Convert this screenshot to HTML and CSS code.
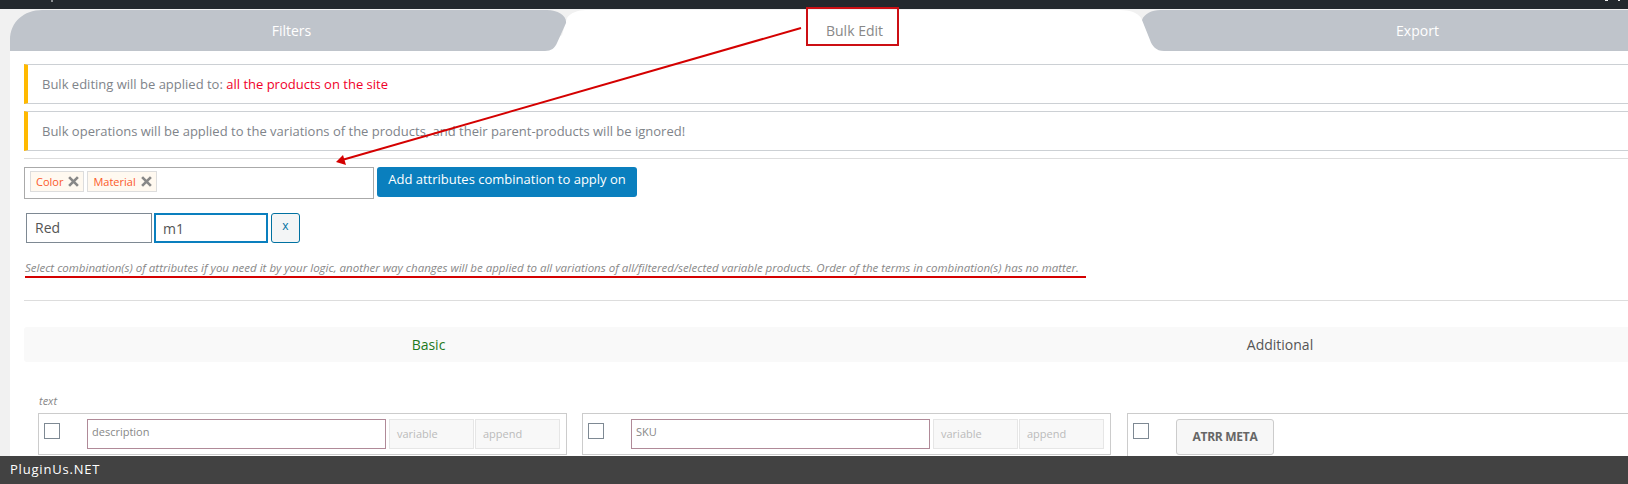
FILE: index.html
```html
<!DOCTYPE html>
<html lang="en">
<head>
<meta charset="utf-8">
<title>Bulk Edit</title>
<link rel="stylesheet" href="styles.css">
</head>
<body>
<div class="page">
  <div class="topbar"></div>
  <nav class="tabs">
    <div class="tab tab-filters">Filters</div>
    <div class="tab tab-bulk">Bulk Edit</div>
    <div class="tab tab-export">Export</div>
  </nav>
  <main class="panel">
    <div class="notice">Bulk editing will be applied to:&nbsp;<span class="notice-red">all the products on the site</span></div>
    <div class="notice">Bulk operations will be applied to the variations of the products, and their parent-products will be ignored!</div>
    <div class="rule rule-top"></div>
    <div class="combo-row">
      <div class="chooser">
        <span class="tag">Color<svg class="tag-x" viewBox="0 0 10 10"><path d="M1 1l8 8M9 1l-8 8"/></svg></span>
        <span class="tag">Material<svg class="tag-x" viewBox="0 0 10 10"><path d="M1 1l8 8M9 1l-8 8"/></svg></span>
      </div>
      <div class="btn-primary">Add attributes combination to apply on</div>
    </div>
    <div class="terms-row">
      <div class="term term-red">Red</div>
      <div class="term term-m1">m1</div>
      <div class="term-del">x</div>
    </div>
    <p class="hint">Select combination(s) of attributes if you need it by your logic, another way changes will be applied to all variations of all/filtered/selected variable products. Order of the terms in combination(s) has no matter.</p>
    <div class="rule rule-bottom"></div>
    <div class="section-tabs">
      <div class="section-tab section-basic">Basic</div>
      <div class="section-tab section-additional">Additional</div>
    </div>
    <div class="group-label">text</div>
    <div class="rows">
      <div class="row-box">
        <span class="check"></span>
        <div class="field field-main">description</div>
        <div class="field field-off field-first">variable</div>
        <div class="field field-off">append</div>
      </div>
      <div class="row-box">
        <span class="check"></span>
        <div class="field field-main">SKU</div>
        <div class="field field-off field-first">variable</div>
        <div class="field field-off">append</div>
      </div>
      <div class="row-box row-box-wide">
        <span class="check"></span>
        <div class="btn-meta">ATRR META</div>
      </div>
    </div>
  </main>
</div>
<svg class="annotations" width="1628" height="484" viewBox="0 0 1628 484">
  <rect class="speck-dim" x="51" y="0" width="2" height="2"/>
  <rect class="speck" x="1605" y="0" width="3" height="1"/>
  <rect class="speck" x="1618" y="0" width="2" height="1"/>
  <rect class="mark-box" x="807" y="8" width="91" height="37"/>
  <line class="mark-line" x1="801" y1="28" x2="342" y2="160"/>
  <polygon class="mark-head" points="336,162 343,155 346,165"/>
  <line class="mark-line" x1="25" y1="277" x2="1086" y2="277"/>
</svg>
<footer class="footer">PluginUs.NET</footer>
</body>
</html>
```
FILE: styles.css
```css
html, body {
  margin: 0;
  height: 484px;
  overflow: hidden;
}
body {
  position: relative;
  background: #f1f1f1;
  font-family: "Open Sans", "Liberation Sans", sans-serif;
  color: #777;
}
.page {
  width: 1699px;
}
.topbar {
  height: 9px;
  margin-bottom: 1px;
  background: #23282d;
}
.tabs {
  display: flex;
  height: 41px;
  margin-left: 10px;
}
.tab {
  height: 41px;
  line-height: 41px;
  font-size: 14px;
  text-align: center;
  box-sizing: border-box;
  flex: none;
}
.tab-filters {
  position: relative;
  z-index: 2;
  width: 557px;
  padding-left: 6px;
  background: #bfc4cb;
  color: #fff;
  clip-path: path("M0 41V30C0 12 14 0 32 0H537C548 0 557 6 556 13L547 33C545 38 541 41 535 41Z");
}
.tab-bulk {
  position: relative;
  z-index: 1;
  width: 625px;
  margin: 0 -25px;
  background: #fff;
  color: #888;
  clip-path: path("M0 41L20 25L25 8C28 3 36 0 44 0H578C590 0 598 4 600 10L625 41Z");
}
.tab-export {
  position: relative;
  z-index: 2;
  width: 551px;
  background: #bfc4cb;
  color: #fff;
  clip-path: path("M0 10C2 4 10 0 18 0H551V41H22C14 41 10 36 8 30Z");
}
.panel {
  margin-left: 10px;
  padding: 13px 0 0 14px;
  background: #fff;
  height: 420px;
  box-sizing: border-box;
}
.notice {
  height: 40px;
  box-sizing: border-box;
  margin-bottom: 7px;
  padding-left: 14px;
  display: flex;
  align-items: center;
  border: 1px solid #ccd0d4;
  border-left: 4px solid #ffb900;
  border-right: 0;
  font-size: 13px;
  color: #80848a;
}
.notice-red {
  color: #f0002a;
}
.rule {
  height: 1px;
  background: #ddd;
}
.rule-top {
  margin-bottom: 8px;
}
.combo-row {
  display: flex;
  align-items: flex-start;
  gap: 3px;
}
.chooser {
  width: 350px;
  height: 32px;
  box-sizing: border-box;
  border: 1px solid #aaa;
  padding: 3px 5px;
  display: flex;
  gap: 3px;
  background: #fff;
}
.tag {
  height: 21px;
  box-sizing: border-box;
  display: flex;
  align-items: center;
  gap: 5px;
  padding: 0 4px 0 5px;
  border: 1px solid #ddd;
  background: #fff9f0;
  color: #fb5a2a;
  font-size: 11px;
}
.tag-x {
  width: 11px;
  height: 11px;
  fill: none;
  stroke: #888;
  stroke-width: 2.4;
}
.btn-primary {
  width: 260px;
  height: 30px;
  line-height: 24px;
  text-align: center;
  border-radius: 3px;
  background: #0a7fbe;
  color: #fff;
  font-size: 13px;
  font-weight: 500;
}
.terms-row {
  display: flex;
  gap: 2px;
  margin: 14px 0 0 2px;
}
.term {
  height: 30px;
  line-height: 28px;
  box-sizing: border-box;
  padding-left: 8px;
  background: #fff;
  color: #555;
  font-size: 14px;
}
.term-red {
  width: 126px;
  border: 1px solid #7e8993;
}
.term-m1 {
  width: 114px;
  padding-left: 7px;
  border: 2px solid #0a7fbe;
  line-height: 27px;
}
.term-del {
  width: 29px;
  height: 30px;
  margin-left: 1px;
  box-sizing: border-box;
  border: 1px solid #0071a1;
  border-radius: 3px;
  background: #f3f5f6;
  color: #0071a1;
  font-size: 12px;
  line-height: 24px;
  text-align: center;
}
.hint {
  margin: 16px 0 0;
  height: 17px;
  line-height: 17px;
  padding-left: 1px;
  font-size: 11.5px;
  font-style: italic;
  color: #888;
  white-space: nowrap;
}
.rule-bottom {
  margin-top: 24px;
}
.section-tabs {
  display: flex;
  margin-top: 26px;
  height: 35px;
  background: #f9f9f9;
  border-radius: 3px;
}
.section-tab {
  line-height: 35px;
  font-size: 14px;
  text-align: center;
  flex: none;
}
.section-basic {
  width: 809px;
  color: #1d7a1d;
}
.section-additional {
  width: 894px;
  color: #555;
}
.group-label {
  margin: 31px 0 0 15px;
  height: 20px;
  line-height: 16px;
  font-size: 11px;
  font-style: italic;
  color: #888;
}
.rows {
  display: flex;
  gap: 15px;
  margin-left: 14px;
}
.row-box {
  width: 529px;
  height: 42px;
  box-sizing: border-box;
  border: 1px solid #ccc;
  padding: 5px 0 0 5px;
  display: flex;
  align-items: flex-start;
  flex: none;
}
.row-box-wide {
  width: 600px;
  height: 60px;
  margin-left: 1px;
}
.check {
  width: 16px;
  height: 16px;
  box-sizing: border-box;
  margin: 4px 27px 0 0;
  border: 1px solid #7e8993;
  background: #fff;
  flex: none;
}
.field {
  height: 30px;
  box-sizing: border-box;
  font-size: 11px;
  flex: none;
}
.field-main {
  width: 299px;
  padding-left: 4px;
  border: 1px solid #b08a98;
  line-height: 24px;
  color: #888;
}
.field-off {
  width: 85px;
  margin-left: 1px;
  padding-left: 7px;
  border: 1px solid #e6e6e6;
  background: #f8f8f8;
  color: #bbb;
  line-height: 28px;
}
.field-first {
  margin-left: 3px;
}
.btn-meta {
  width: 98px;
  height: 36px;
  box-sizing: border-box;
  border: 1px solid #ccc;
  border-radius: 3px;
  background: #f7f7f7;
  color: #666;
  font-size: 12px;
  font-weight: 700;
  line-height: 34px;
  text-align: center;
  letter-spacing: -0.3px;
}
.annotations {
  position: absolute;
  left: 0;
  top: 0;
  z-index: 5;
  pointer-events: none;
}
.mark-box {
  fill: none;
  stroke: #cc0f14;
  stroke-width: 2;
}
.mark-line {
  stroke: #d40000;
  stroke-width: 2;
}
.mark-head {
  fill: #d40000;
}
.speck {
  fill: #eee;
}
.speck-dim {
  fill: #8a8d90;
}
.footer {
  position: absolute;
  left: 0;
  right: 0;
  top: 456px;
  height: 28px;
  z-index: 6;
  padding-left: 10px;
  background: #424242;
  color: #fff;
  font-size: 13px;
  line-height: 27px;
  letter-spacing: 0.8px;
}
```
